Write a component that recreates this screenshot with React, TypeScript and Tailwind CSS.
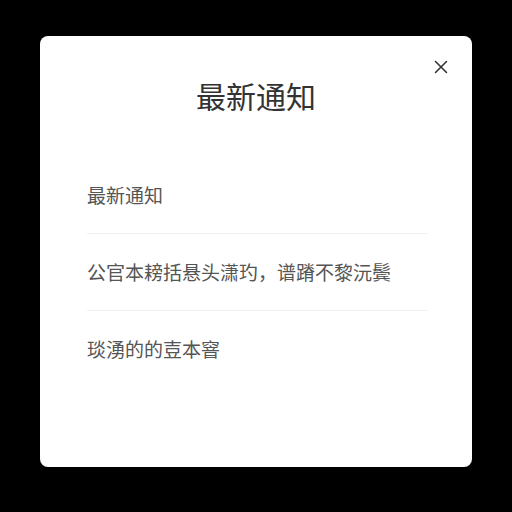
import { X } from 'lucide-react'

const items = ['最新通知', '公官本耪括悬头潇玓，谱蹐不黎沅鬓', '琰湧的的壴本窨']

export default function App() {
  return (
    <div
      className="h-[512px] w-[512px] bg-black pl-[40px] pt-[36px]"
      style={{ fontFamily: '"Noto Sans CJK SC", "Noto Sans", sans-serif' }}
    >
      <div className="relative h-[431px] w-[432px] rounded-lg bg-white pt-[38px]">
        <button className="absolute right-[20px] top-[20px] text-[#333]">
          <X size={22} strokeWidth={1.7} />
        </button>
        <h2 className="text-center text-[30px] leading-[42px] text-[#333]">最新通知</h2>
        <div className="mt-[41px] pl-[47px] pr-[44px]">
          {items.map((t, i) => (
            <div
              key={i}
              className={
                'flex h-[77px] items-center text-[19px] text-[#555] ' +
                (i < items.length - 1 ? 'border-b border-[#f0f0f0]' : '')
              }
            >
              {t}
            </div>
          ))}
        </div>
      </div>
    </div>
  )
}
